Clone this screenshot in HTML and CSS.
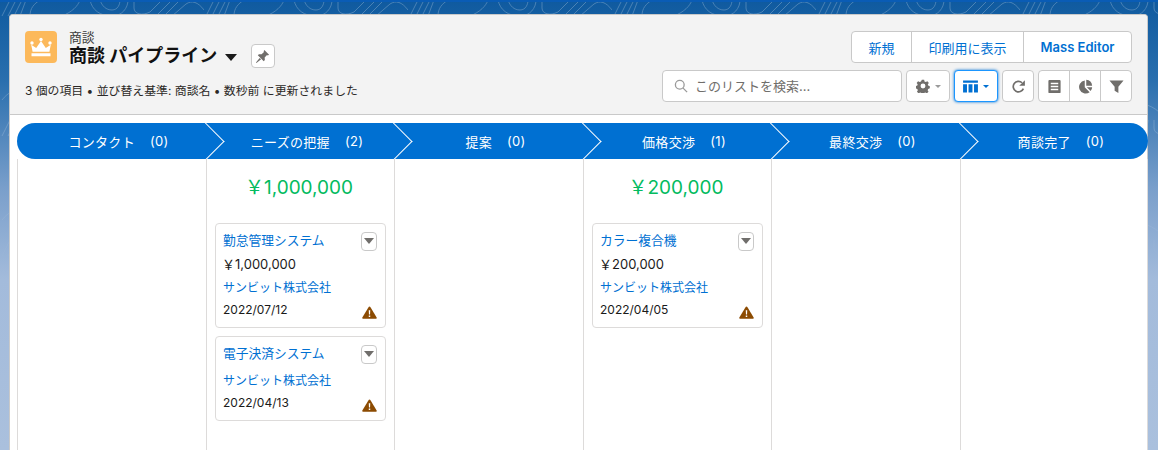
FILE: index.html
```html
<!DOCTYPE html>
<html lang="ja">
<head>
    <meta charset="UTF-8">
    <title>商談 パイプライン</title>
    <link rel="stylesheet" href="styles.css">
</head>
<body>
    <svg class="contours" viewBox="0 0 1158 450" width="1158" height="450">
        <defs>
            <pattern id="contour-tile" width="204" height="120" patternUnits="userSpaceOnUse">
                <g fill="none" stroke="#fff" stroke-width=".8">
                    <path d="M2 16 10 0M8 16 16 0M14 16 22 0M20 16 26 0M30 16C30 8 34 4 40 0"/>
                    <path d="M62 16C72 12 78 6 80 0M90 0C92 10 100 16 112 16C122 16 128 8 128 0M100 0C102 6 106 10 112 10C118 10 120 4 120 0"/>
                    <path d="M134 0V8C134 14 142 16 150 12L162 0M156 16 172 0M164 16 180 0M172 16 186 4C192 0 198 2 204 10"/>
                    <path d="M18 60C4 40 30 22 40 40C50 58 28 76 18 60ZM24 58C16 46 30 34 36 44C42 54 30 66 24 58Z"/>
                    <path d="M150 70C136 48 170 30 180 52C190 74 162 90 150 70Z"/>
                    <path d="M2 100C14 84 36 86 44 100C50 112 42 120 36 120M90 120C100 100 130 96 146 120"/>
                </g>
            </pattern>
            <linearGradient id="contour-fade" x1="0" y1="0" x2="0" y2="1">
                <stop offset="0" stop-color="#fff" stop-opacity=".3"/>
                <stop offset=".35" stop-color="#fff" stop-opacity=".22"/>
                <stop offset=".6" stop-color="#fff" stop-opacity="0"/>
            </linearGradient>
            <mask id="contour-mask">
                <rect width="1158" height="450" fill="url(#contour-fade)"/>
            </mask>
        </defs>
        <rect width="1158" height="450" fill="url(#contour-tile)" mask="url(#contour-mask)"/>
    </svg>
    <div class="panel">
        <header class="page-header">
            <div class="header-left">
                <div class="title-row">
                    <div class="app-icon">
                        <svg viewBox="0 0 32 32" width="32" height="32"><path fill="#fff" d="M6.500 22.300h19v3h-19zM7.600 20.800 6.200 13.800l5 3.200L16 10l4.800 7 5-3.200-1.400 7z"/><circle fill="#fff" cx="7" cy="12" r="1.700"/><circle fill="#fff" cx="16" cy="8.500" r="1.700"/><circle fill="#fff" cx="25" cy="12" r="1.700"/></svg>
                    </div>
                    <div class="titles">
                        <div class="object-name">商談</div>
                        <div class="list-name">商談 パイプライン <span class="title-caret"></span></div>
                    </div>
                    <button class="pin-btn">
                        <svg viewBox="0 0 16 16" width="15" height="15"><path fill="#706e6b" d="M10 1 15 6l-1.400.8-.8-.4-2.500 2.600.2 2.800L9.300 13 3 6.700l1.200-1.200 2.800.2 2.600-2.500-.4-.8z"/><path fill="#706e6b" d="M5 9.500 6.500 11l-5 4-.5-.5z"/></svg>
                    </button>
                </div>
                <div class="status">3 個の項目 • 並び替え基準: 商談名 • 数秒前 に更新されました</div>
            </div>
            <div class="header-right">
                <div class="btn-group actions">
                    <button class="btn">新規</button>
                    <button class="btn">印刷用に表示</button>
                    <button class="btn btn-strong">Mass Editor</button>
                </div>
                <div class="tools">
                    <div class="search">
                        <svg viewBox="0 0 16 16" width="14" height="14"><circle cx="6.600" cy="6.600" r="5" fill="none" stroke="#9a9a9a" stroke-width="1.500"/><path d="M10.400 10.400 15 15" stroke="#9a9a9a" stroke-width="1.500"/></svg>
                        <span>このリストを検索...</span>
                    </div>
                    <button class="tool tool-drop">
                        <svg viewBox="0 0 16 16" width="14" height="14"><path fill="#706e6b" fill-rule="evenodd" d="M6.700.8h2.600l.4 2 1.500.7 1.800-1 1.700 2-1.200 1.600.4 1.400 1.900.8v2.400l-1.900.7-.6 1.500 1 1.700-1.900 1.800-1.700-1-1.500.6-.5 1.900H6.700l-.5-1.900-1.500-.6-1.700 1-1.900-1.800 1-1.700-.6-1.500-1.900-.7V8.300l1.900-.8.4-1.400L.7 4.500l1.700-2 1.800 1 1.500-.7zM8 5.200a2.800 2.800 0 1 0 0 5.600 2.800 2.800 0 0 0 0-5.600z"/></svg>
                        <i class="mini-caret"></i>
                    </button>
                    <button class="tool tool-drop tool-active">
                        <svg viewBox="0 0 16 14" width="15" height="13"><path fill="#0070d2" d="M0 .5h16v2.500H0zM0 4.500h4.200v9H0zM5.900 4.500h4.200v9H5.900zM11.800 4.500H16v9h-4.200z"/></svg>
                        <i class="mini-caret blue"></i>
                    </button>
                    <button class="tool tool-one">
                        <svg viewBox="0 0 16 16" width="15" height="15"><path fill="none" stroke="#706e6b" stroke-width="1.800" d="M13.200 10.200A5.600 5.600 0 1 1 11.800 4"/><path fill="#706e6b" d="M14.800 1.200v6H8.800z"/></svg>
                    </button>
                    <div class="btn-group">
                        <button class="tool tool-one">
                            <svg viewBox="0 0 16 16" width="15" height="15"><path fill="#706e6b" fill-rule="evenodd" d="M2.500 1h11c.6 0 1 .4 1 1v12c0 .6-.4 1-1 1h-11c-.6 0-1-.4-1-1V2c0-.6.4-1 1-1zM4 4v1.700h8V4zm0 3.200v1.600h8V7.200zm0 3.100V12h8v-1.700z"/></svg>
                        </button>
                        <button class="tool tool-one">
                            <svg viewBox="0 0 16 16" width="15" height="15"><path fill="#706e6b" d="M7.200 1.500v7.300l5.200 5.200A7 7 0 1 1 7.200 1.500z"/><path fill="#706e6b" d="M8.800.9a7 7 0 0 1 6.300 6.300H8.800zM15.100 8.800a7 7 0 0 1-1.600 4.100L9.400 8.800z"/></svg>
                        </button>
                        <button class="tool tool-one">
                            <svg viewBox="0 0 16 16" width="15" height="15"><path fill="#706e6b" d="M.5 1.500h15L10 8.200V15l-4-2.500V8.200z"/></svg>
                        </button>
                    </div>
                </div>
            </div>
        </header>

        <div class="stages">
            <div class="stage"><span>コンタクト</span><span>(0)</span></div>
            <div class="stage"><span>ニーズの把握</span><span>(2)</span></div>
            <div class="stage"><span>提案</span><span>(0)</span></div>
            <div class="stage"><span>価格交渉</span><span>(1)</span></div>
            <div class="stage"><span>最終交渉</span><span>(0)</span></div>
            <div class="stage"><span>商談完了</span><span>(0)</span></div>
        </div>

        <div class="board">
            <div class="column"></div>
            <div class="column">
                <div class="total">￥1,000,000</div>
                <div class="card">
                    <div class="card-top">
                        <a class="link card-title">勤怠管理システム</a>
                        <button class="menu-btn"><i></i></button>
                    </div>
                    <div class="line amount">￥1,000,000</div>
                    <div class="line"><a class="link">サンビット株式会社</a></div>
                    <div class="card-bottom">
                        <span>2022/07/12</span>
                        <svg class="warn" viewBox="0 0 16 14" width="15" height="13"><path fill="#8c4b02" d="M8 .5c.4 0 .7.2.9.5l6.800 11.300c.4.7 0 1.400-.8 1.400H1.100c-.8 0-1.200-.7-.8-1.400L7.100 1c.2-.3.5-.5.9-.5z"/><path fill="#fff" d="M7.200 4.500h1.600l-.2 4.700H7.400zM7.200 10.200h1.600v1.600H7.200z"/></svg>
                    </div>
                </div>
                <div class="card">
                    <div class="card-top">
                        <a class="link card-title">電子決済システム</a>
                        <button class="menu-btn"><i></i></button>
                    </div>
                    <div class="line line-gap"><a class="link">サンビット株式会社</a></div>
                    <div class="card-bottom">
                        <span>2022/04/13</span>
                        <svg class="warn" viewBox="0 0 16 14" width="15" height="13"><path fill="#8c4b02" d="M8 .5c.4 0 .7.2.9.5l6.800 11.300c.4.7 0 1.400-.8 1.400H1.100c-.8 0-1.200-.7-.8-1.400L7.100 1c.2-.3.5-.5.9-.5z"/><path fill="#fff" d="M7.200 4.500h1.600l-.2 4.700H7.400zM7.200 10.200h1.600v1.600H7.200z"/></svg>
                    </div>
                </div>
            </div>
            <div class="column"></div>
            <div class="column">
                <div class="total">￥200,000</div>
                <div class="card">
                    <div class="card-top">
                        <a class="link card-title">カラー複合機</a>
                        <button class="menu-btn"><i></i></button>
                    </div>
                    <div class="line amount">￥200,000</div>
                    <div class="line"><a class="link">サンビット株式会社</a></div>
                    <div class="card-bottom">
                        <span>2022/04/05</span>
                        <svg class="warn" viewBox="0 0 16 14" width="15" height="13"><path fill="#8c4b02" d="M8 .5c.4 0 .7.2.9.5l6.800 11.300c.4.7 0 1.400-.8 1.400H1.100c-.8 0-1.200-.7-.8-1.400L7.100 1c.2-.3.5-.5.9-.5z"/><path fill="#fff" d="M7.200 4.500h1.600l-.2 4.700H7.400zM7.200 10.200h1.600v1.600H7.200z"/></svg>
                    </div>
                </div>
            </div>
            <div class="column"></div>
            <div class="column"></div>
        </div>
    </div>
</body>
</html>
```
FILE: styles.css
```css
* {
    box-sizing: border-box;
}
body {
    position: relative;
    margin: 0;
    height: 450px;
    overflow: hidden;
    padding: 12px 10px 0 9px;
    font-family: Inter, "Noto Sans CJK JP", sans-serif;
    font-size: 12px;
    color: #1a1a1a;
    border-top: 2px solid #0a5cb5;
    background: linear-gradient(180deg, #0f5a9f 0%, #2a6fae 18%, #7a9fcb 42%, #a3bbdb 62%, #aac0dd 100%);
}
button {
    font-family: inherit;
    background: #fff;
    cursor: pointer;
    padding: 0;
}
.contours {
    position: absolute;
    left: 0;
    top: -2px;
}
.panel {
    position: relative;
    height: 100%;
    background: #fff;
    border: 1px solid #c9c9c9;
    border-bottom: none;
    border-radius: 4px 4px 0 0;
}
.page-header {
    height: 100px;
    background: #f3f3f3;
    border-bottom: 1px solid #c9c9c9;
    border-radius: 4px 4px 0 0;
    padding: 16px 15px 0 15px;
    display: flex;
    justify-content: space-between;
}
.title-row {
    display: flex;
    align-items: flex-start;
}
.app-icon {
    width: 32px;
    height: 32px;
    background: #fcb95b;
    border-radius: 4px;
    margin-right: 12px;
}
.object-name {
    font-size: 12.750px;
    line-height: 14px;
    color: #3e3e3c;
}
.list-name {
    font-size: 18px;
    line-height: 22px;
    font-weight: 700;
    color: #111;
}
.title-caret {
    display: inline-block;
    margin-left: 3px;
    border-left: 6px solid transparent;
    border-right: 6px solid transparent;
    border-top: 7px solid #1a1a1a;
    vertical-align: 1px;
}
.pin-btn {
    width: 24px;
    height: 24px;
    margin: 13px 0 0 14px;
    border: 1px solid #c9c9c9;
    border-radius: 4px;
    display: flex;
    align-items: center;
    justify-content: center;
}
.status {
    margin-top: 15px;
    font-size: 11.900px;
    line-height: 16px;
    color: #2b2826;
}
.header-right {
    display: flex;
    flex-direction: column;
    align-items: flex-end;
}
.btn-group {
    display: flex;
    background: #fff;
    border: 1px solid #c9c9c9;
    border-radius: 4px;
}
.btn-group > button {
    border: none;
    background: transparent;
    border-left: 1px solid #c9c9c9;
}
.btn-group > button:first-child {
    border-left: none;
}
.btn {
    height: 30px;
    padding: 0 16.500px;
    font-size: 13px;
    color: #0070d2;
}
.btn-strong {
    font-weight: 600;
}
.tools {
    display: flex;
    margin-top: 7px;
    gap: 4px;
}
.search {
    width: 240px;
    height: 32px;
    display: flex;
    align-items: center;
    gap: 7px;
    padding: 0 0 1px 11px;
    background: #fff;
    border: 1px solid #c9c9c9;
    border-radius: 4px;
    color: #706e6b;
    font-size: 13px;
}
.tool {
    height: 30px;
    width: 31px;
    display: flex;
    align-items: center;
    justify-content: center;
}
.btn-group > .tool:first-child {
    width: 30px;
}
.tools > .tool {
    height: 32px;
    width: 32px;
    border: 1px solid #c9c9c9;
    border-radius: 4px;
}
.tools > .tool-drop {
    width: 44px;
    gap: 5px;
}
.tool-active {
    border-color: #1b96ff !important;
    box-shadow: 0 0 3px #0070d2;
}
.mini-caret {
    border-left: 3px solid transparent;
    border-right: 3px solid transparent;
    border-top: 3.500px solid #9a9a9a;
}
.mini-caret.blue {
    border-top-color: #0070d2;
}
.stages, .board {
    display: grid;
    grid-template-columns: 189px 188px 189px 188px 189px 1fr;
}
.stages {
    height: 36px;
    margin: 8px -1px 0 7px;
    background: #0070d2;
    border-radius: 18px;
    overflow: hidden;
}
.stage {
    position: relative;
    display: flex;
    align-items: center;
    justify-content: center;
    gap: 15px;
    padding-left: 14px;
    color: #fff;
    font-size: 13px;
    letter-spacing: .3px;
}
.stage:not(:last-child)::after {
    content: "";
    position: absolute;
    right: -13px;
    top: 5px;
    width: 26px;
    height: 26px;
    border-top: 1.500px solid #fff;
    border-right: 1.500px solid #fff;
    transform: rotate(45deg);
}
.board {
    height: 300px;
    margin: 0 -1px 0 7px;
    border-left: 1px solid #dddbda;
    border-right: 1px solid #dddbda;
    grid-template-columns: 188px 188px 189px 188px 189px 1fr;
}
.column {
    padding: 0 8px;
    border-left: 1px solid #dddbda;
}
.column:first-child {
    border-left: none;
}
.total {
    height: 64px;
    padding: 16px 3px 0 0;
    text-align: center;
    font-size: 19px;
    line-height: 26px;
    color: #04bb5f;
}
.card {
    margin-bottom: 8px;
    padding: 5px 8px 7px 7px;
    background: #fff;
    border: 1px solid #dddbda;
    border-radius: 4px;
}
.card-top, .card-bottom {
    display: flex;
    justify-content: space-between;
    align-items: center;
}
.card-top {
    height: 24px;
}
.card-bottom {
    height: 21px;
}
.card-title {
    font-size: 12.750px;
    margin-bottom: 3px;
}
.line {
    line-height: 23px;
}
.line-gap {
    margin-top: 3px;
}
.amount {
    font-size: 13px;
    margin-left: -1px;
}
.link {
    color: #0070d2;
    text-decoration: none;
}
.menu-btn {
    width: 16px;
    height: 19px;
    border: 1px solid #c9c9c9;
    border-radius: 4px;
    display: flex;
    align-items: center;
    justify-content: center;
}
.menu-btn i {
    border-left: 5px solid transparent;
    border-right: 5px solid transparent;
    border-top: 6px solid #706e6b;
}
.warn {
    margin-top: 6px;
}
```
